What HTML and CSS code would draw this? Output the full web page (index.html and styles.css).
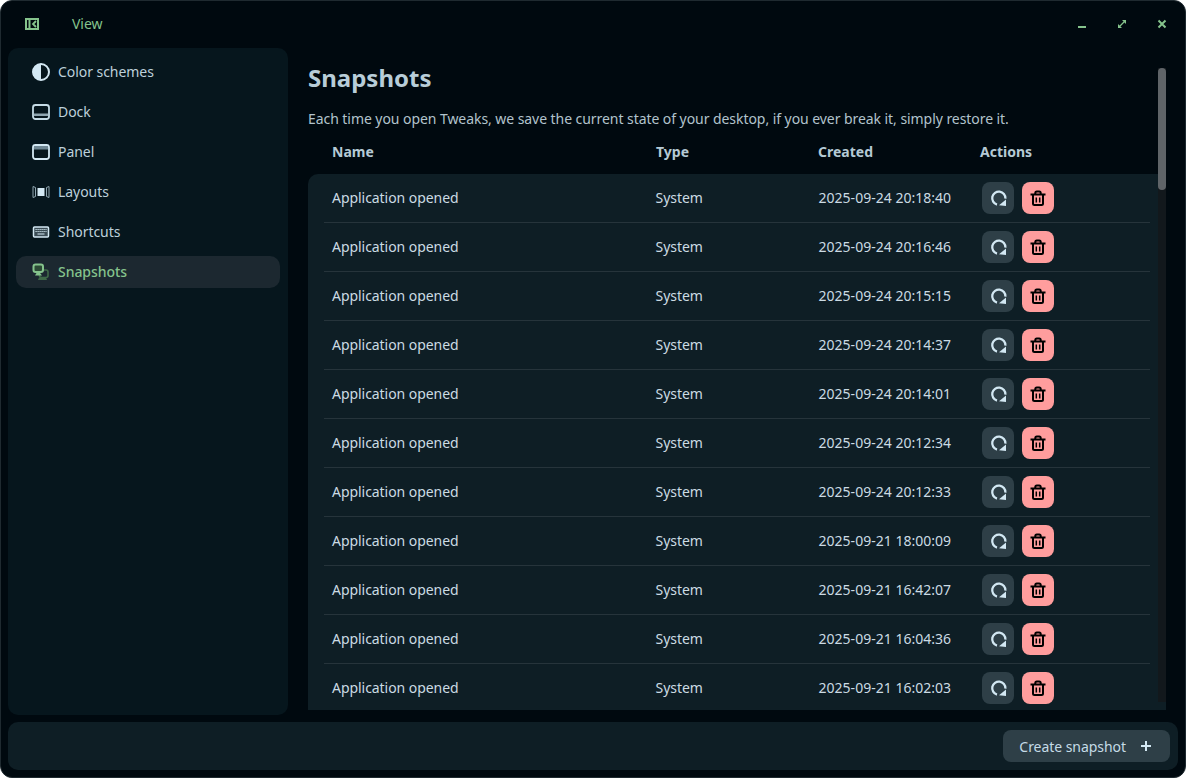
FILE: index.html
```html
<!DOCTYPE html>
<html lang="en">
<head>
    <meta charset="UTF-8">
    <title>Tweaks</title>
    <link rel="stylesheet" href="styles.css">
</head>
<body>
    <div class="window">
        <header class="titlebar">
            <div class="title-left">
                <svg class="app-logo" width="14" height="12" viewBox="0 0 14 12">
                    <path fill="#85c38c" fill-rule="evenodd" d="M0 0h14v12H0zM2 2v8h1.500V2zM5.500 2v8H12V2z"/>
                    <path fill="none" stroke="#85c38c" stroke-width="1.800" d="M11 3 8 6l3 3"/>
                </svg>
                <span class="view-label">View</span>
            </div>
            <div class="window-controls">
                <svg width="10" height="10" viewBox="0 0 10 10"><rect x="1" y="7" width="8" height="2" fill="#85c38c"/></svg>
                <svg width="10" height="10" viewBox="0 0 10 10"><path fill="none" stroke="#85c38c" stroke-width="1.300" d="M2 8 8 2"/><path fill="#85c38c" d="M5 1h4v4zM1 5v4h4z"/></svg>
                <svg width="10" height="10" viewBox="0 0 10 10"><path fill="none" stroke="#85c38c" stroke-width="2" d="M1.500 1.500l7 7M8.500 1.500l-7 7"/></svg>
            </div>
        </header>

        <div class="main">
            <nav class="sidebar">
                <a class="nav-item">
                    <svg class="nav-icon" viewBox="0 0 18 18"><circle cx="9" cy="9" r="8" fill="none" stroke="#d3e8f3" stroke-width="2"/><path fill="#d3e8f3" d="M9 1a8 8 0 0 0 0 16z"/></svg>
                    Color schemes
                </a>
                <a class="nav-item">
                    <svg class="nav-icon" viewBox="0 0 18 18"><rect x="1" y="2" width="16" height="14" rx="2.500" fill="none" stroke="#c5dbe6" stroke-width="1.800"/><rect x="2" y="10.500" width="14" height="2.500" fill="#8fa5b0"/></svg>
                    Dock
                </a>
                <a class="nav-item">
                    <svg class="nav-icon" viewBox="0 0 18 18"><rect x="1" y="2" width="16" height="14" rx="2.500" fill="none" stroke="#d3e8f3" stroke-width="1.800"/><rect x="2" y="3" width="14" height="3.500" fill="#6f8794"/></svg>
                    Panel
                </a>
                <a class="nav-item">
                    <svg class="nav-icon" viewBox="0 0 18 18"><rect x="5.500" y="5" width="7" height="8" fill="#d3e8f3"/><path fill="none" stroke="#8fa5b0" stroke-width="1" d="M1 3.500v11l2.500-1v-9zM17 3.500v11l-2.500-1v-9z"/></svg>
                    Layouts
                </a>
                <a class="nav-item">
                    <svg class="nav-icon" viewBox="0 0 18 18"><rect x="1.500" y="4" width="15" height="10" rx="1" fill="#3b4c55" stroke="#d3e8f3" stroke-width="1.500"/><path stroke="#d3e8f3" stroke-width="1.200" stroke-dasharray="1.200 .8" d="M3.500 6.500h11M3.500 8.500h11"/><path stroke="#d3e8f3" stroke-width="1.200" d="M5.500 11h7"/></svg>
                    Shortcuts
                </a>
                <a class="nav-item active">
                    <svg class="nav-icon" viewBox="0 0 18 18"><rect x="7.500" y="7" width="8.500" height="7.500" rx="2" fill="none" stroke="#3f6a48" stroke-width="1.600"/><path fill="#3f6a48" d="M7 14.500h7l1 2.500H6z"/><rect x="1.500" y="1.500" width="9.500" height="7.500" rx="2" fill="#2c4a35" stroke="#85c38c" stroke-width="2"/><path fill="#85c38c" d="M4.500 10h3.500l2 2.500H3z"/></svg>
                    Snapshots
                </a>
            </nav>

            <section class="content">
                <div class="scroll-area">
                    <h1>Snapshots</h1>
                    <p class="subtitle">Each time you open Tweaks, we save the current state of your desktop, if you ever break it, simply restore it.</p>
                    <div class="table-head">
                        <span>Name</span>
                        <span>Type</span>
                        <span>Created</span>
                        <span>Actions</span>
                    </div>
                    <div class="table-body" id="rows"></div>
                </div>
                <div class="scrollbar"><div class="thumb"></div></div>
            </section>
        </div>

        <footer class="bottom-bar">
            <button class="create-btn">Create snapshot
                <svg width="12" height="12" viewBox="0 0 12 12"><path stroke="#d3e8f3" stroke-width="2" d="M6 1v10M1 6h10"/></svg>
            </button>
        </footer>
    </div>
    <script src="rows.js"></script>
</body>
</html>
```

FILE: rows.js
```js
const dates = [
    '2025-09-24 20:18:40', '2025-09-24 20:16:46', '2025-09-24 20:15:15',
    '2025-09-24 20:14:37', '2025-09-24 20:14:01', '2025-09-24 20:12:34',
    '2025-09-24 20:12:33', '2025-09-21 18:00:09', '2025-09-21 16:42:07',
    '2025-09-21 16:04:36', '2025-09-21 16:02:03'
];

const restoreIcon = '<svg width="18" height="18" viewBox="0 0 18 18"><path fill="none" stroke="#d3e8f3" stroke-width="2.300" d="M16.400 9.600A6.600 6.600 0 1 0 8 15.550"/><path fill="#d3e8f3" d="M10 16.300 17 10.500V17z"/></svg>';
const trashIcon = '<svg width="16" height="16" viewBox="0 0 16 16"><path fill="none" stroke="#000" stroke-width="2" d="M.5 4.500h15M3 4.500v9a1.500 1.500 0 0 0 1.500 1.500h7a1.500 1.500 0 0 0 1.500-1.500v-9M5.300 4.500V3A1.500 1.500 0 0 1 6.800 1.500h2.400A1.500 1.500 0 0 1 10.700 3v1.500"/><path fill="none" stroke="#000" stroke-width="1.500" d="M6.300 7.500v5M9.700 7.500v5"/></svg>';

const rows = document.getElementById('rows');

dates.forEach(date => {
    const row = document.createElement('div');
    row.className = 'row';
    row.innerHTML = `
        <span>Application opened</span>
        <span>System</span>
        <span class="date">${date}</span>
        <span class="actions">
            <button class="icon-btn restore">${restoreIcon}</button>
            <button class="icon-btn delete">${trashIcon}</button>
        </span>`;
    rows.appendChild(row);
});
```

FILE: styles.css
```css
* {
    box-sizing: border-box;
}

html, body {
    height: 100%;
}

body {
    margin: 0;
    background-color: #fff;
    font-family: 'Noto Sans', sans-serif;
    font-size: 14px;
    line-height: 18px;
    letter-spacing: -0.05px;
    color: #c5dbe6;
    overflow: hidden;
}

.window {
    height: 778px;
    display: flex;
    flex-direction: column;
    background-color: #00090f;
    border: 1px solid #1f2a30;
    border-radius: 12px;
    overflow: hidden;
}

.titlebar {
    height: 47px;
    flex: none;
    display: flex;
    align-items: center;
    justify-content: space-between;
    padding: 0 18px 2px 24px;
}

.title-left {
    display: flex;
    align-items: center;
    gap: 33px;
}

.view-label {
    color: #85c38c;
}

.window-controls {
    display: flex;
    align-items: center;
    gap: 30px;
}

.main {
    flex: 1;
    min-height: 0;
    display: flex;
    padding-left: 7px;
}

.sidebar {
    width: 280px;
    height: 667px;
    flex: none;
    display: flex;
    flex-direction: column;
    gap: 8px;
    padding: 8px;
    background-color: #06161d;
    border-radius: 10px;
}

.nav-item {
    height: 32px;
    display: flex;
    align-items: center;
    gap: 8px;
    padding: 0 16px;
    border-radius: 10px;
    color: #bdd0da;
}

.nav-item.active {
    background-color: #1c2830;
    color: #85c38c;
    font-weight: 500;
}

.nav-icon {
    width: 18px;
    height: 18px;
    flex: none;
}

.content {
    flex: 1;
    position: relative;
    height: 662px;
    overflow: hidden;
    padding-left: 20px;
    margin-right: 19px;
}

.scroll-area {
    width: 858px;
}

h1 {
    margin: 13px 0 0;
    font-size: 24px;
    line-height: 33px;
    font-weight: 700;
    letter-spacing: 0;
    color: #b8cdd8;
}

.subtitle {
    margin: 16px 0 0;
    line-height: 18px;
    letter-spacing: -0.06px;
    color: #b2c3cc;
}

.table-head,
.row {
    display: grid;
    align-items: center;
}

.table-head {
    grid-template-columns: 324px 162px 162px 1fr;
    height: 46px;
    padding: 4px 0 3px 24px;
    font-weight: 700;
    letter-spacing: 0;
    color: #b5cad5;
}

.table-body {
    background-color: #0e1e25;
    border-radius: 10px 0 0 0;
    padding: 0 16px;
}

.row {
    grid-template-columns: 323.5px 163px 161.5px 1fr;
    height: 49px;
    border-bottom: 1px solid #26343b;
    padding-left: 8px;
    color: #cbdbe3;
}

.date {
    letter-spacing: 0.02px;
}

.actions {
    display: flex;
    gap: 8px;
    padding-left: 2px;
}

.icon-btn {
    width: 32px;
    height: 32px;
    padding: 0;
    border: none;
    border-radius: 8px;
    display: flex;
    align-items: center;
    justify-content: center;
}

.icon-btn.restore {
    background-color: #2e3f47;
}

.icon-btn.delete {
    background-color: #ff9d9d;
}

.scrollbar {
    position: absolute;
    top: 20px;
    right: 0;
    height: 634px;
    width: 8px;
    background-color: #12181c;
}

.thumb {
    height: 122px;
    background-color: #5f6468;
    border-radius: 4px;
}

.bottom-bar {
    height: 48px;
    flex: none;
    margin: 7px;
    background-color: #0e1e25;
    border-radius: 10px;
    display: flex;
    align-items: center;
    justify-content: flex-end;
    padding-right: 8px;
}

.create-btn {
    height: 32px;
    display: flex;
    align-items: center;
    gap: 14px;
    padding: 0 18px 0 16px;
    border: none;
    border-radius: 8px;
    background-color: #2e3f47;
    color: #c5dbe6;
    font-family: inherit;
    font-size: 14px;
    letter-spacing: inherit;
}
```
